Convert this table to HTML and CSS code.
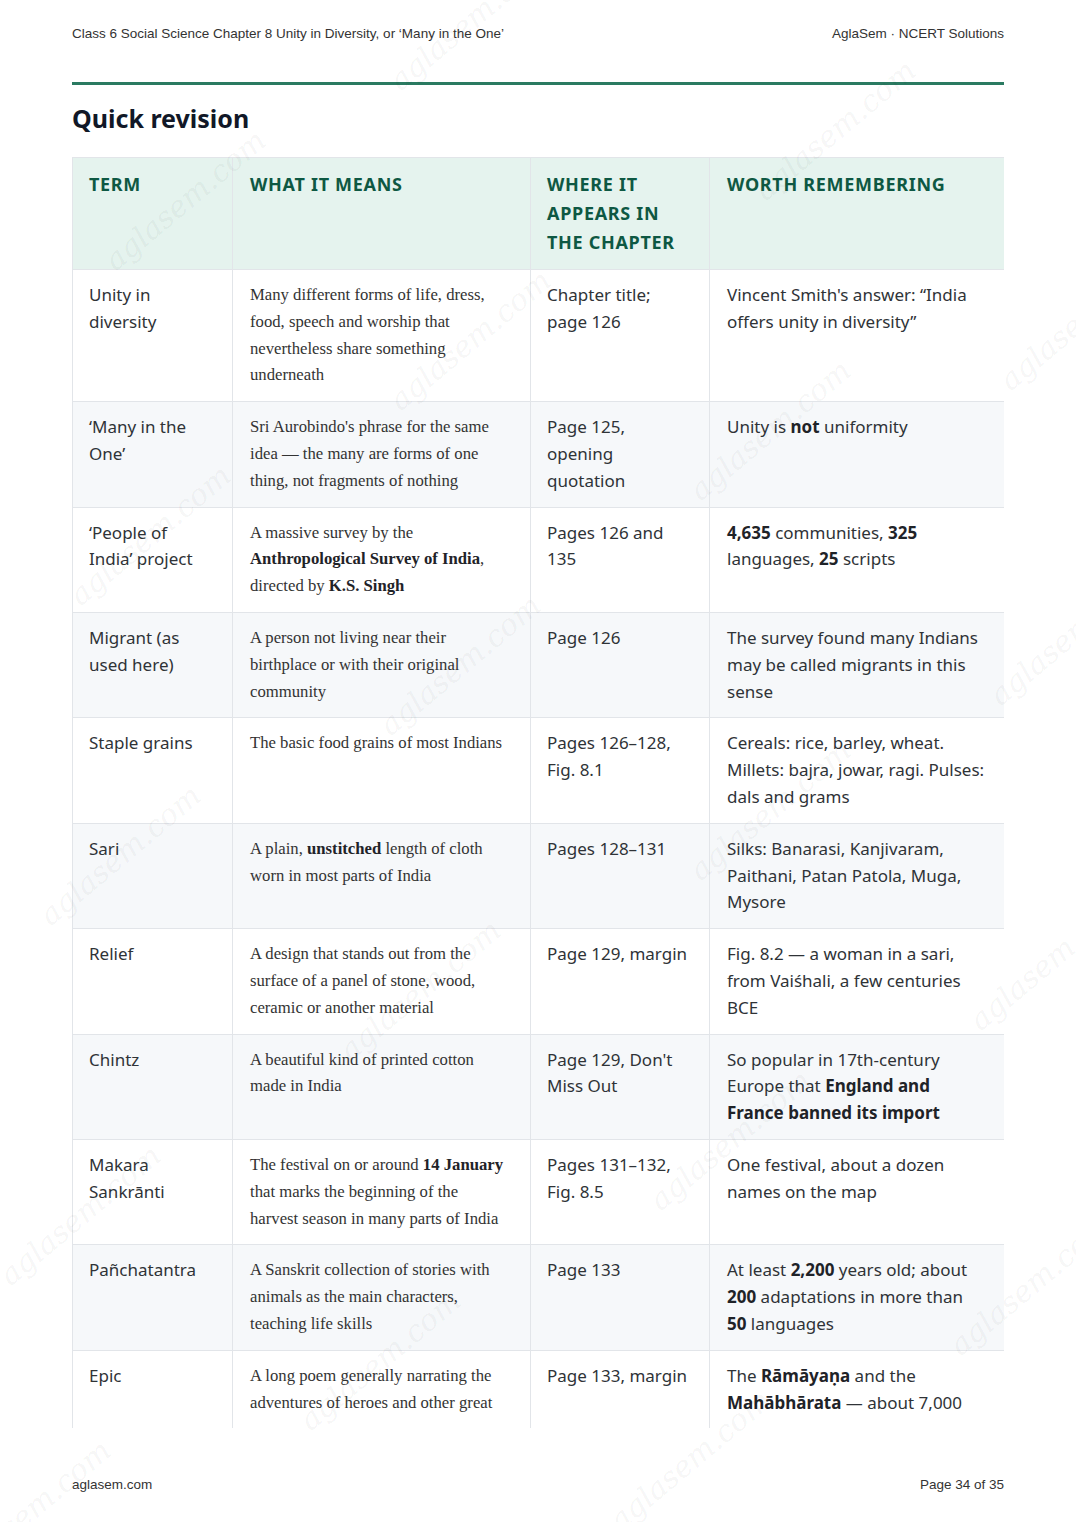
FILE: index.html
```html
<!DOCTYPE html>
<html lang="en">
<head>
<meta charset="utf-8">
<title>Quick revision</title>
<link rel="stylesheet" href="styles.css">
</head>
<body>
<div class="page">
  <header class="running-head">
    <span>Class 6 Social Science Chapter 8 Unity in Diversity, or ‘Many in the One’</span>
    <span>AglaSem · NCERT Solutions</span>
  </header>
  <div class="rule"></div>
  <h2 class="title">Quick revision</h2>
  <div class="table-clip">
    <table class="rev">
      <colgroup>
        <col class="c1"><col class="c2"><col class="c3"><col class="c4">
      </colgroup>
      <thead>
        <tr>
          <th>TERM</th>
          <th>WHAT IT MEANS</th>
          <th>WHERE IT APPEARS IN THE CHAPTER</th>
          <th>WORTH REMEMBERING</th>
        </tr>
      </thead>
      <tbody>
        <tr>
          <td>Unity in diversity</td>
          <td class="serif">Many different forms of life, dress, food, speech and worship that nevertheless share something underneath</td>
          <td>Chapter title; page 126</td>
          <td>Vincent Smith's answer: “India offers unity in diversity”</td>
        </tr>
        <tr>
          <td>‘Many in the One’</td>
          <td class="serif">Sri Aurobindo's phrase for the same idea — the many are forms of one thing, not fragments of nothing</td>
          <td>Page 125, opening quotation</td>
          <td>Unity is <b>not</b> uniformity</td>
        </tr>
        <tr>
          <td>‘People of India’ project</td>
          <td class="serif">A massive survey by the <b>Anthropological Survey of India</b>, directed by <b>K.S. Singh</b></td>
          <td>Pages 126 and 135</td>
          <td><b>4,635</b> communities, <b>325</b> languages, <b>25</b> scripts</td>
        </tr>
        <tr>
          <td>Migrant (as used here)</td>
          <td class="serif">A person not living near their birthplace or with their original community</td>
          <td>Page 126</td>
          <td>The survey found many Indians may be called migrants in this sense</td>
        </tr>
        <tr>
          <td>Staple grains</td>
          <td class="serif">The basic food grains of most Indians</td>
          <td>Pages 126–128, Fig. 8.1</td>
          <td>Cereals: rice, barley, wheat. Millets: bajra, jowar, ragi. Pulses: dals and grams</td>
        </tr>
        <tr>
          <td>Sari</td>
          <td class="serif">A plain, <b>unstitched</b> length of cloth worn in most parts of India</td>
          <td>Pages 128–131</td>
          <td>Silks: Banarasi, Kanjivaram, Paithani, Patan Patola, Muga, Mysore</td>
        </tr>
        <tr>
          <td>Relief</td>
          <td class="serif">A design that stands out from the surface of a panel of stone, wood, ceramic or another material</td>
          <td>Page 129, margin</td>
          <td>Fig. 8.2 — a woman in a sari, from Vaiśhali, a few centuries BCE</td>
        </tr>
        <tr>
          <td>Chintz</td>
          <td class="serif">A beautiful kind of printed cotton made in India</td>
          <td>Page 129, Don't Miss Out</td>
          <td>So popular in 17th-century Europe that <b>England and France banned its import</b></td>
        </tr>
        <tr>
          <td>Makara Sankrānti</td>
          <td class="serif">The festival on or around <b>14 January</b> that marks the beginning of the harvest season in many parts of India</td>
          <td>Pages 131–132, Fig. 8.5</td>
          <td>One festival, about a dozen names on the map</td>
        </tr>
        <tr>
          <td>Pañchatantra</td>
          <td class="serif">A Sanskrit collection of stories with animals as the main characters, teaching life skills</td>
          <td>Page 133</td>
          <td>At least <b>2,200</b> years old; about <b>200</b> adaptations in more than <b>50</b> languages</td>
        </tr>
        <tr class="continues">
          <td>Epic</td>
          <td class="serif">A long poem generally narrating the adventures of heroes and other great</td>
          <td>Page 133, margin</td>
          <td>The <b>Rāmāyaṇa</b> and the <b>Mahābhārata</b> — about 7,000</td>
        </tr>
      </tbody>
    </table>
  </div>
  <footer class="running-foot">
    <span>aglasem.com</span>
    <span>Page 34 of 35</span>
  </footer>
  <div class="watermarks" aria-hidden="true">
    <span class="wm w1">aglasem.com</span>
    <span class="wm w2">aglasem.com</span>
    <span class="wm w3">aglasem.com</span>
    <span class="wm w4">aglasem.com</span>
    <span class="wm w5">aglasem.com</span>
    <span class="wm w6">aglasem.com</span>
    <span class="wm w7">aglasem.com</span>
    <span class="wm w8">aglasem.com</span>
    <span class="wm w9">aglasem.com</span>
    <span class="wm w10">aglasem.com</span>
    <span class="wm w11">aglasem.com</span>
    <span class="wm w12">aglasem.com</span>
    <span class="wm w13">aglasem.com</span>
    <span class="wm w14">aglasem.com</span>
    <span class="wm w15">aglasem.com</span>
    <span class="wm w16">aglasem.com</span>
    <span class="wm w17">aglasem.com</span>
    <span class="wm w18">aglasem.com</span>
    <span class="wm w19">aglasem.com</span>
  </div>
</div>
</body>
</html>
```

FILE: styles.css
```css
* { box-sizing: border-box; }

html, body {
  margin: 0;
  padding: 0;
  background: #ffffff;
}

.page {
  position: relative;
  width: 1076px;
  height: 1522px;
  overflow: hidden;
  display: flex;
  flex-direction: column;
  padding: 0 72px;
  background: #ffffff;
}

.running-head {
  display: flex;
  justify-content: space-between;
  padding-top: 26px;
  font-family: "Liberation Sans", Arial, sans-serif;
  font-size: 13.5px;
  line-height: 16px;
  color: #333333;
}

.rule {
  margin-top: 40px;
  height: 3px;
  background: #2a7a61;
}

.title {
  margin: 17px 0 0;
  font-family: "Noto Sans", "Open Sans", sans-serif;
  font-weight: 700;
  font-size: 25px;
  line-height: 32px;
  color: #111827;
}

.table-clip {
  margin-top: 23px;
  height: 1271px;
  overflow: hidden;
}

.rev {
  width: 932px;
  border-collapse: collapse;
  table-layout: fixed;
  font-family: "Noto Sans", "Open Sans", sans-serif;
  font-size: 17px;
  line-height: 26.8px;
  color: #2f3337;
}

.rev .c1 { width: 160px; }
.rev .c2 { width: 298px; }
.rev .c3 { width: 179px; }
.rev .c4 { width: 295px; }

.rev th,
.rev td {
  border: 1px solid #e2e5e9;
  padding: 12px 16px 12px 17px;
  text-align: left;
  vertical-align: top;
}

.rev th:nth-child(1),
.rev td:nth-child(1) {
  padding-left: 16px;
  padding-right: 20px;
}

.rev th:nth-child(2),
.rev td:nth-child(2) {
  padding-right: 23px;
}

.rev th:nth-child(3),
.rev td:nth-child(3) {
  padding-left: 16px;
  padding-right: 17px;
}

.rev th:nth-child(4),
.rev td:nth-child(4) {
  padding-right: 18.5px;
}

.rev th {
  background: #e5f3ee;
  color: #0e5843;
  font-weight: 700;
  font-size: 18px;
  line-height: 29px;
  letter-spacing: 0.7px;
}

.rev tbody tr:nth-child(even) td {
  background: #f6f8fa;
}

.rev tbody tr.continues td {
  padding-bottom: 60px;
}

.rev td b {
  font-weight: 700;
  color: #1f2328;
}

.rev td.serif {
  font-family: "Liberation Serif", "Times New Roman", serif;
  font-size: 16.7px;
  color: #333333;
}

.running-foot {
  display: flex;
  justify-content: space-between;
  margin-top: 49px;
  font-family: "Liberation Sans", Arial, sans-serif;
  font-size: 13.5px;
  line-height: 16px;
  color: #333333;
}

.watermarks {
  position: absolute;
  inset: 0;
  pointer-events: none;
}

.wm {
  position: absolute;
  transform: translate(-50%, -50%) rotate(-40deg);
  font-family: "DejaVu Serif", serif;
  font-style: italic;
  font-size: 30px;
  color: rgba(0, 0, 0, 0.05);
  white-space: nowrap;
}

.w1 { left: 185px; top: 200px; }
.w2 { left: 470px; top: 20px; }
.w3 { left: 470px; top: 340px; }
.w4 { left: 835px; top: 130px; }
.w5 { left: 1080px; top: 320px; }
.w6 { left: 150px; top: 535px; }
.w7 { left: 770px; top: 430px; }
.w8 { left: 460px; top: 665px; }
.w9 { left: 1070px; top: 635px; }
.w10 { left: 120px; top: 855px; }
.w11 { left: 770px; top: 810px; }
.w12 { left: 420px; top: 990px; }
.w13 { left: 1050px; top: 960px; }
.w14 { left: 730px; top: 1140px; }
.w15 { left: 80px; top: 1215px; }
.w16 { left: 380px; top: 1360px; }
.w17 { left: 1030px; top: 1285px; }
.w18 { left: 690px; top: 1460px; }
.w19 { left: 30px; top: 1510px; }
```
